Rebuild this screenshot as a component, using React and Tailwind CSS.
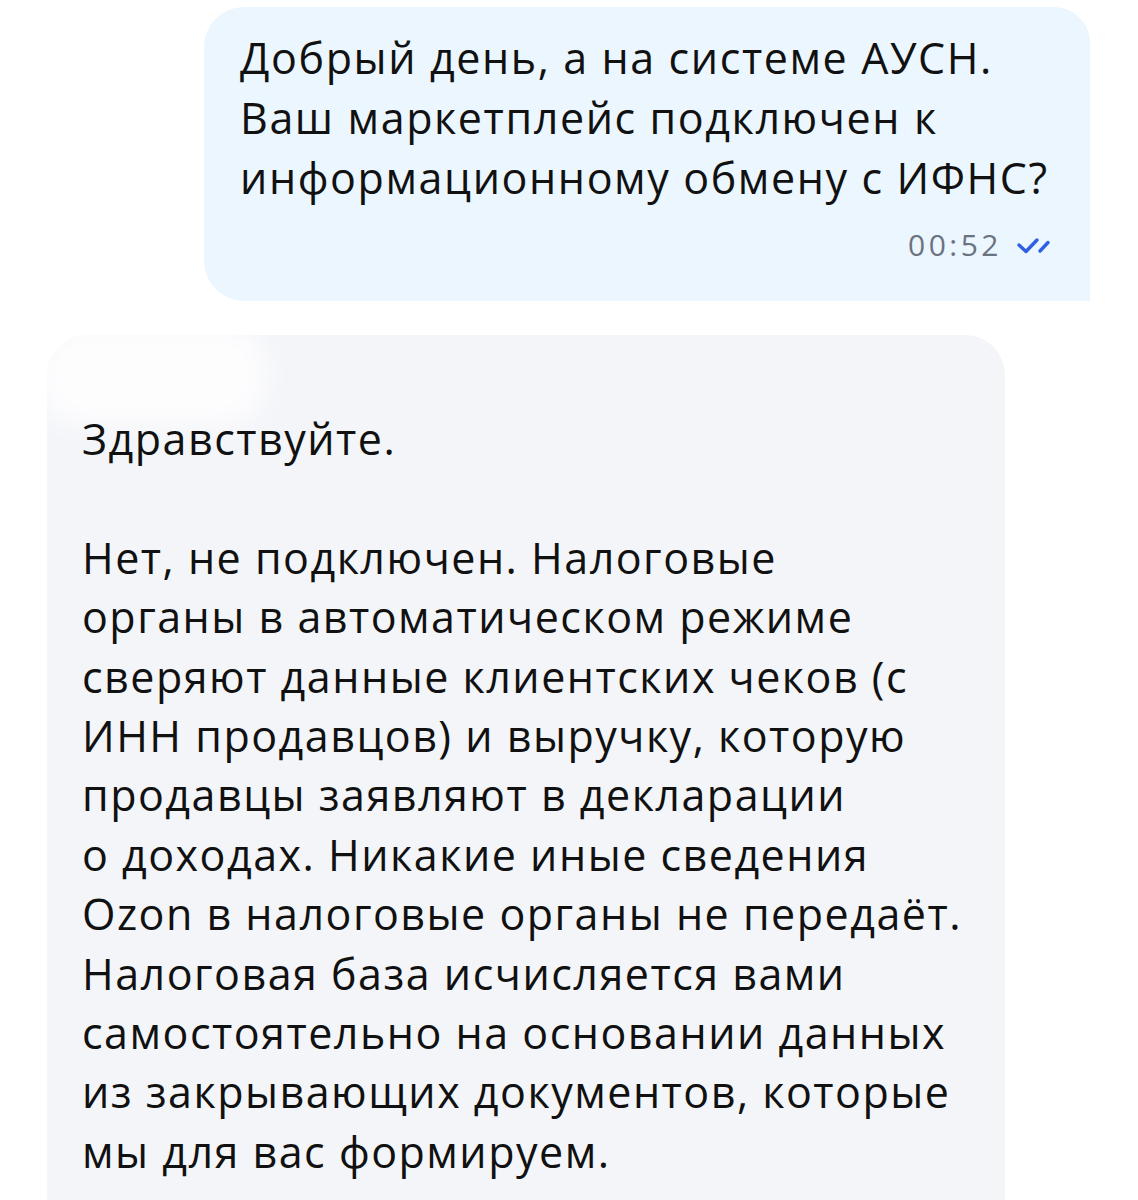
import React from 'react';

const incoming = [
    'Нет, не подключен. Налоговые',
    'органы в автоматическом режиме',
    'сверяют данные клиентских чеков (с',
    'ИНН продавцов) и выручку, которую',
    'продавцы заявляют в декларации',
    'о доходах. Никакие иные сведения',
    'Ozon в налоговые органы не передаёт.',
    'Налоговая база исчисляется вами',
    'самостоятельно на основании данных',
    'из закрывающих документов, которые',
    'мы для вас формируем.',
];

const outgoing = [
    'Добрый день, а на системе АУСН.',
    'Ваш маркетплейс подключен к',
    'информационному обмену с ИФНС?',
];

const ReadIcon = () => (
    <svg width="40" height="18" viewBox="0 0 40 18" fill="none" className="text-[#2f5fe3]">
        <path d="M3 9 L10 15.5 L21 4" stroke="currentColor" strokeWidth="3.4" strokeLinecap="round" strokeLinejoin="round" />
        <path d="M24 15 L32 6.5" stroke="currentColor" strokeWidth="3.4" strokeLinecap="round" />
    </svg>
);

export default function App() {
    return (
        <div className="w-[1138px] h-[1200px] bg-white overflow-hidden text-[#111] [font-family:'Open_Sans',sans-serif]">
            {/* исходящее сообщение */}
            <div className="flex justify-end pt-[7px] pr-[48px]">
                <div className="w-[886px] h-[294px] bg-[#ebf6fe] rounded-tl-[40px] rounded-tr-[36px] rounded-bl-[40px] pl-[36px] pt-[21px]">
                    <div className="text-[43px] leading-[60px] tracking-[1.6px] whitespace-nowrap">
                        {outgoing.map((line) => <p key={line}>{line}</p>)}
                    </div>
                    <div className="flex justify-end items-center gap-[14px] pr-[34px] mt-[20px]">
                        <span className="text-[30px] leading-[34px] tracking-[3.5px] text-[#6b7280]">00:52</span>
                        <ReadIcon />
                    </div>
                </div>
            </div>

            {/* входящее сообщение */}
            <div className="relative mt-[34px] ml-[47px] w-[958px] h-[900px] bg-[#f4f5f9] rounded-tl-[40px] rounded-tr-[40px] pl-[35px] pt-[74px]">
                <div className="absolute -left-[10px] -top-[10px] w-[230px] h-[100px] rounded-[40px] bg-white/80 blur-[14px]" />
                <div className="relative text-[43px] leading-[59.4px] tracking-[1.5px] whitespace-nowrap">
                    <p>Здравствуйте.</p>
                    <p className="h-[59.4px]" />
                    {incoming.map((line) => <p key={line}>{line}</p>)}
                </div>
            </div>
        </div>
    );
}
